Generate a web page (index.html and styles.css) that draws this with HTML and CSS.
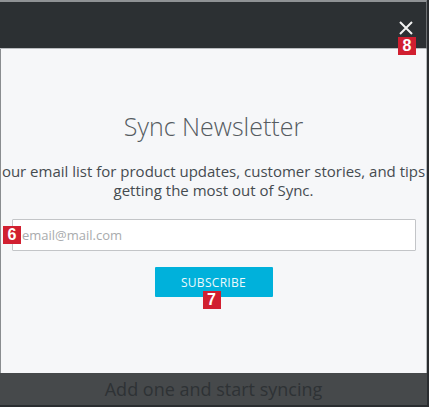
FILE: index.html
```html
<!DOCTYPE html>
<html>
<head>
<meta charset="utf-8">
<link rel="stylesheet" href="styles.css">
</head>
<body>
<div class="frame">
  <header class="topbar">
    <button class="close" aria-label="Close">
      <svg width="14" height="14" viewBox="0 0 14 14"><path d="M1 1 L13 13 M13 1 L1 13" stroke="#f2f2f2" stroke-width="2" fill="none"/></svg>
    </button>
    <span class="badge badge-8">8</span>
  </header>
  <main class="panel">
    <h1 class="title">Sync Newsletter</h1>
    <p class="desc">
      <span class="line">our email list for product updates, customer stories, and tips</span>
      <span class="line">getting the most out of Sync.</span>
    </p>
    <div class="field">
      <input class="email" type="text" placeholder="email@mail.com">
      <span class="badge badge-6">6</span>
    </div>
    <div class="actions">
      <button class="subscribe">SUBSCRIBE</button>
      <span class="badge badge-7">7</span>
    </div>
  </main>
  <footer class="bottom">Add one and start syncing</footer>
</div>
</body>
</html>
```

FILE: styles.css
```css
html, body {
  margin: 0;
  padding: 0;
  background: #2c3033;
}
.frame {
  width: 429px;
  height: 407px;
  display: flex;
  flex-direction: column;
  font-family: "Open Sans", "Noto Sans", sans-serif;
  box-sizing: border-box;
  border-right: 2px solid #2a2d30;
  overflow: hidden;
}
.topbar {
  position: relative;
  height: 46px;
  border-top: 2px solid #8f9295;
  border-bottom: 1px solid #b9bcbf;
  border-right: 1px solid #6d7073;
  background: #2c3033;
  flex: none;
}
.close {
  position: absolute;
  right: 12px;
  top: 18px;
  width: 16px;
  height: 16px;
  padding: 0;
  border: 0;
  background: none;
  display: flex;
  align-items: center;
  justify-content: center;
}
.badge {
  position: absolute;
  width: 18px;
  height: 18px;
  background: #d11f30;
  color: #fff;
  font-family: "Liberation Sans", Arial, sans-serif;
  font-weight: 700;
  font-size: 16px;
  line-height: 18px;
  text-align: center;
}
.badge-8 {
  right: 10px;
  top: 35px;
}
.panel {
  flex: 1;
  background: #f6f7f9;
  border-left: 1px solid #8a8d90;
  border-right: 1px solid #b8bbbe;
  display: flex;
  flex-direction: column;
  align-items: center;
  padding-top: 60px;
}
.title {
  margin: 0;
  font-weight: 300;
  font-size: 25px;
  line-height: 34px;
  color: #555b61;
}
.desc {
  margin: 19px 0 0;
  display: flex;
  flex-direction: column;
  align-items: center;
  font-size: 15px;
  line-height: 19px;
  color: #454b50;
  white-space: nowrap;
}
.field {
  position: relative;
  align-self: stretch;
  margin: 19px 10px 0 11px;
}
.email {
  display: block;
  width: 100%;
  box-sizing: border-box;
  height: 32px;
  border: 1px solid #c3c5c8;
  border-radius: 1px;
  background: #fff;
  padding: 0 9px;
  font-family: "Open Sans", sans-serif;
  font-size: 13px;
  color: #333;
}
.email::placeholder {
  color: #a9abad;
}
.badge-6 {
  left: -9px;
  top: 7px;
}
.actions {
  position: relative;
  margin-top: 16px;
}
.subscribe {
  display: block;
  width: 118px;
  height: 30px;
  border: 0;
  border-radius: 1px;
  background: #00b1db;
  color: #eef9fc;
  font-family: "Open Sans", sans-serif;
  font-size: 12px;
  letter-spacing: 0.3px;
  padding: 0;
}
.badge-7 {
  left: 48px;
  top: 24px;
}
.bottom {
  flex: none;
  height: 32px;
  background: #46494b;
  border-bottom: 2px solid #2a2d30;
  color: #2e3235;
  font-size: 18px;
  line-height: 32px;
  text-align: center;
}
```
